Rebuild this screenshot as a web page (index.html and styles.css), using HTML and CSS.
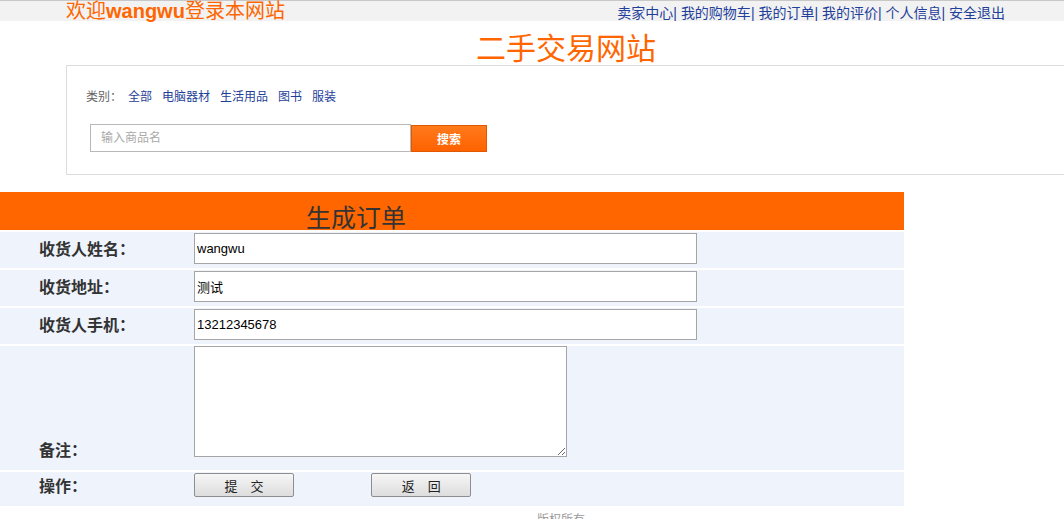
FILE: index.html
```html
<!DOCTYPE html>
<html lang="zh-CN">
<head>
    <meta charset="UTF-8">
    <title>生成订单 - 二手交易网站</title>
    <link rel="stylesheet" href="styles.css">
</head>
<body>
    <div class="topbar">
        <div class="welcome">欢迎<b>wangwu</b>登录本网站</div>
        <div class="user-links">
            <a href="#">卖家中心</a>| <a href="#">我的购物车</a>| <a href="#">我的订单</a>| <a href="#">我的评价</a>| <a href="#">个人信息</a>| <a href="#">安全退出</a>
        </div>
    </div>

    <div class="header">
        <h1 class="site-title">二手交易网站</h1>
        <div class="search-box">
            <div class="category">
                <span class="category-label">类别：</span>
                <a href="#">全部</a>
                <a href="#">电脑器材</a>
                <a href="#">生活用品</a>
                <a href="#">图书</a>
                <a href="#">服装</a>
            </div>
            <form class="search-form">
                <input type="text" class="search-input" placeholder="输入商品名">
                <button type="button" class="search-button">搜索</button>
            </form>
        </div>
    </div>

    <form class="order-form">
        <table class="order-table">
            <tr class="title-row">
                <td colspan="2">生成订单</td>
            </tr>
            <tr class="field-row">
                <td class="label">收货人姓名：</td>
                <td class="field"><input type="text" class="text-input" value="wangwu"></td>
            </tr>
            <tr class="field-row">
                <td class="label">收货地址：</td>
                <td class="field"><input type="text" class="text-input" value="测试"></td>
            </tr>
            <tr class="field-row">
                <td class="label">收货人手机：</td>
                <td class="field"><input type="text" class="text-input" value="13212345678"></td>
            </tr>
            <tr class="note-row">
                <td class="label">备注：</td>
                <td class="field"><textarea class="note-input"></textarea></td>
            </tr>
            <tr class="action-row">
                <td class="label">操作：</td>
                <td class="field">
                    <button type="button" class="form-button">提　交</button>
                    <button type="button" class="form-button back">返　回</button>
                </td>
            </tr>
        </table>
    </form>

    <div class="footer">版权所有</div>
</body>
</html>
```

FILE: styles.css
```css
body {
    margin: 0;
    font-family: "Liberation Sans", "Noto Sans CJK SC", sans-serif;
    font-size: 12px;
    color: #333;
    background: #fff;
    overflow: hidden;
}

a {
    color: #1f3f9a;
    text-decoration: none;
}

/* top bar */
.topbar {
    display: flex;
    justify-content: space-between;
    height: 20px;
    padding: 0 59px 0 66px;
    border-top: 1px solid #c8c8c8;
    background-color: #f2f2f2;
}

.welcome {
    font-size: 20px;
    line-height: 21px;
    color: #ff6600;
    white-space: nowrap;
}

.welcome b {
    font-weight: bold;
}

.user-links {
    padding-top: 3px;
    font-size: 14px;
    line-height: 18px;
    color: #1f3f9a;
    white-space: nowrap;
}

/* header + search */
.header {
    width: 1000px;
    margin-left: 66px;
}

.site-title {
    margin: 0;
    padding: 13px 0 1px;
    font-size: 30px;
    line-height: 30px;
    font-weight: normal;
    color: #ff6600;
    text-align: center;
}

.search-box {
    padding: 20px 19px 22px;
    border: 1px solid #dcdcdc;
}

.category {
    display: flex;
    line-height: 22px;
    gap: 10px;
}

.category-label {
    color: #666;
    margin-right: -4px;
}

.search-form {
    display: flex;
    align-items: flex-end;
    margin: 16px 0 0 4px;
}

.search-input {
    box-sizing: border-box;
    width: 321px;
    height: 28px;
    padding: 0 10px;
    border: 1px solid #b8b8b8;
    font-family: "Liberation Sans", "Noto Sans CJK SC", sans-serif;
    font-size: 12px;
    outline: none;
}

.search-input::placeholder {
    color: #aaa;
}

.search-button {
    box-sizing: border-box;
    width: 76px;
    height: 27px;
    border: 1px solid #e05800;
    background: linear-gradient(#ff7a1c, #ff6200);
    color: #fff;
    font-family: "Noto Sans CJK SC", sans-serif;
    font-size: 12px;
    font-weight: bold;
    cursor: pointer;
}

/* order table */
.order-table {
    width: 904px;
    margin-top: 15px;
    border-collapse: separate;
    border-spacing: 0 2px;
}

.order-table td {
    padding: 0;
    vertical-align: top;
    background-color: #eef3fc;
}

.order-table td.field {
    padding-left: 2px;
}

.title-row {
    height: 38px;
}

.title-row td {
    padding: 12px 0 0 306px;
    font-family: "Noto Sans CJK SC", serif;
    font-size: 25px;
    line-height: 24px;
    color: #333;
    background-color: #ff6600;
}

.field-row {
    height: 36px;
}

.note-row {
    height: 124px;
}

.action-row {
    height: 34px;
}

.order-table td.label {
    width: 153px;
    padding-left: 39px;
    font-family: "Noto Sans CJK SC", serif;
    font-size: 16px;
    font-weight: bold;
    line-height: 33px;
    color: #333;
}

.note-row td.label {
    vertical-align: bottom;
    padding-bottom: 11px;
    line-height: 20px;
}

.action-row td.label {
    line-height: 26px;
}

.text-input {
    display: block;
    box-sizing: border-box;
    width: 503px;
    height: 31px;
    margin-top: 1px;
    padding: 0 2px;
    border: 1px solid #a5a5a5;
    font-family: "Liberation Sans", "Noto Sans CJK SC", sans-serif;
    font-size: 13px;
    color: #000;
}

.note-input {
    display: block;
    box-sizing: border-box;
    width: 373px;
    height: 111px;
    margin-top: 0;
    border: 1px solid #a5a5a5;
    resize: both;
}

.form-button {
    box-sizing: border-box;
    width: 100px;
    height: 24px;
    margin-top: 1px;
    border: 1px solid #8e8e8e;
    border-radius: 2px;
    background: linear-gradient(#f6f6f6, #dddddd);
    font-family: "Noto Sans CJK SC", sans-serif;
    font-size: 13px;
    color: #222;
}

.form-button.back {
    margin-left: 74px;
}

.footer {
    margin-top: 4px;
    padding-left: 537px;
    font-size: 12px;
    line-height: 16px;
    color: #999;
}
```
